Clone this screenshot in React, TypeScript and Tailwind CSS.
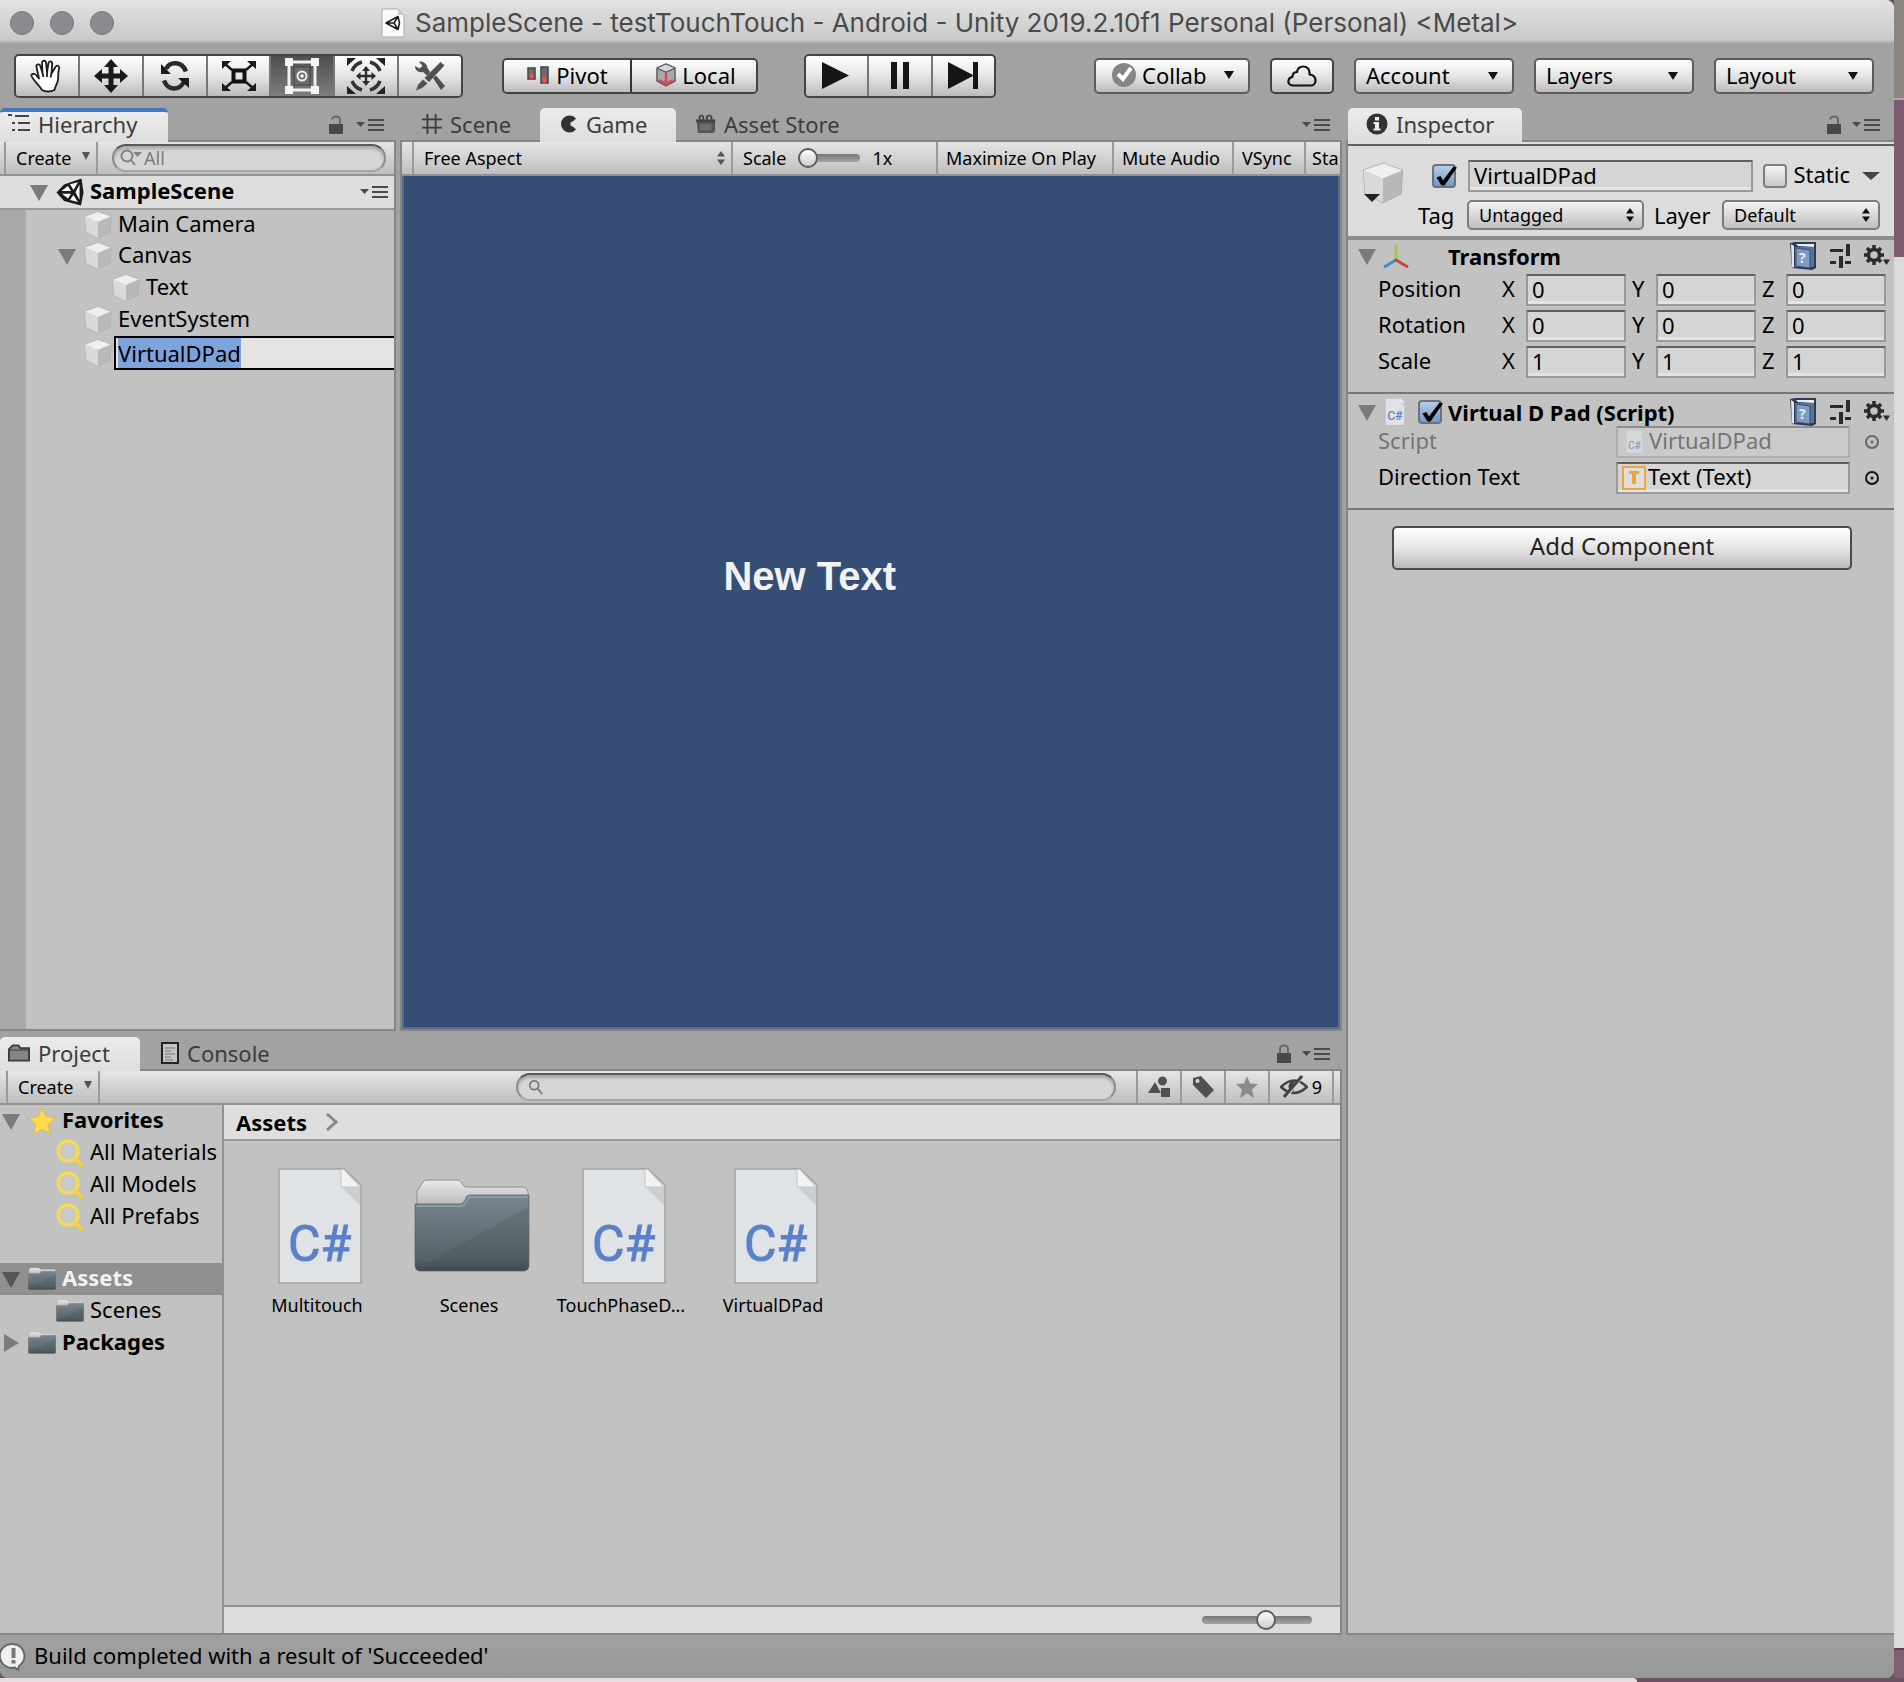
import React, { useEffect, useRef } from "react";

const BTN = "bg-linear-to-b from-white via-[#e6e5e6] to-[#bdbabc]";
const BAR = "flex h-[34px] shrink-0 border-b-2 border-[#919191] bg-linear-to-b from-[#e6e6e6] to-[#bebebe]";
const FIELD =
  "border-2 border-t-[#5f5f5f] border-x-[#9a9a9a] border-b-[#9a9a9a] bg-[#d5d5d5] shadow-[inset_0_-3px_0_#e4e4e4]";

/* ---------- icons ---------- */

function UnityMark({ size }: { size: number }) {
  return (
    <svg width={size} height={size} viewBox="0 0 28 28" aria-hidden="true">
      <path d="M0.5 14.5 8 6.5 25.5 0.5 27.5 14.5 25 27.5 8 23Z" fill="#1c1c1c" />
      <path d="M17.5 12 14 6.3 22 4.2Z" fill="#fff" />
      <path d="M6 12.5 12 8 15 13H6Z" fill="#fff" />
      <path d="M6 15.8H15L12 20.5Z" fill="#fff" />
      <path d="M17.3 17 22 24 14 22Z" fill="#fff" />
      <path d="M19.5 14.3 23.5 6.5V22Z" fill="#fff" />
    </svg>
  );
}

function Cube({ size = 28 }: { size?: number }) {
  return (
    <svg width={size} height={size} viewBox="0 0 28 28" className="shrink-0" aria-hidden="true">
      <path d="M14 1 27 5.5 26 21 14 27 2 21 1 5.5Z" fill="#d0d0d0" stroke="#a5a5a5" strokeWidth=".8" />
      <path d="M14 1 27 5.5 14 11 1 5.5Z" fill="#efefef" />
      <path d="M1 5.5 14 11V27L2 21Z" fill="#d9d9d9" />
      <path d="M27 5.5 14 11V27L26 21Z" fill="#b8b8b8" />
    </svg>
  );
}

function Foldout({ open = true, dark = false }: { open?: boolean; dark?: boolean }) {
  return (
    <svg width="18" height="18" viewBox="0 0 18 18" className="shrink-0" fill={dark ? "#555" : "#7b7b7b"} aria-hidden="true">
      {open ? <path d="M0 2H18L9 18Z" /> : <path d="M2 0V18L17 9Z" />}
    </svg>
  );
}

function PaneMenu() {
  return (
    <button aria-label="Pane options" className="flex">
      <svg width="28" height="14" viewBox="0 0 28 14" fill="#4a4a4a" aria-hidden="true">
        <path d="M0 4H9L4.5 9Z" />
        <path d="M12 1H28V3H12ZM12 6H28V8H12ZM12 11H28V13H12Z" />
      </svg>
    </button>
  );
}

function Lock({ open = true }: { open?: boolean }) {
  return (
    <button aria-label="Lock" className="flex">
      <svg width="16" height="20" viewBox="0 0 16 20" aria-hidden="true">
        <rect x="1" y="9" width="14" height="10" fill="#484848" />
        <path d={open ? "M4 4.5C4.500 2 7 1.500 8 1.500C10.500 1.500 12 3 12 5V9" : "M4 9V5C4 3 5.500 1.500 8 1.500C10.500 1.500 12 3 12 5V9"} fill="none" stroke="#6a6a6a" strokeWidth="2" />
      </svg>
    </button>
  );
}

function Down({ w = 10, fill = "#111" }: { w?: number; fill?: string }) {
  return (
    <svg width={w} height={8} viewBox="0 0 10 8" preserveAspectRatio="none" fill={fill} aria-hidden="true">
      <path d="M0 0H10L5 8Z" />
    </svg>
  );
}

function UpDown({ fill = "#111" }: { fill?: string }) {
  return (
    <svg width="8" height="14" viewBox="0 0 8 14" fill={fill} aria-hidden="true">
      <path d="M4 0 8 5.500H0ZM4 14 8 8.500H0Z" />
    </svg>
  );
}

function ScriptIcon({ w, h }: { w: number; h: number }) {
  return (
    <svg width={w} height={h} viewBox="0 0 84 118" className="shrink-0" aria-hidden="true">
      <path d="M1 1H66L83 17V115H1Z" fill="#dfe3e5" stroke="#a3a3a3" strokeWidth="1.500" />
      <path d="M63 19 82 37V17Z" fill="#cccfd1" />
      <path d="M63 1.500V19H82L66 1.500Z" fill="#f0f2f3" stroke="#c4c7c8" />
      <text x="10" y="93" fontFamily="Roboto, sans-serif" fontSize="50" fill="#5a80c8" stroke="#5a80c8" strokeWidth="1">C#</text>
    </svg>
  );
}

function Folder({ w, h }: { w: number; h: number }) {
  return (
    <svg width={w} height={h} viewBox="0 0 116 96" className="shrink-0" aria-hidden="true">
      <defs>
        <linearGradient id="folderBody" x1="0" y1="0" x2="0" y2="1">
          <stop offset="0" stopColor="#78868e" />
          <stop offset=".85" stopColor="#566168" />
          <stop offset="1" stopColor="#3f4a50" />
        </linearGradient>
        <linearGradient id="folderTab" x1="0" y1="0" x2="0" y2="1">
          <stop offset="0" stopColor="#e9e9e9" />
          <stop offset="1" stopColor="#b4b4b4" />
        </linearGradient>
      </defs>
      <path d="M3 26V12L9 3Q10 1 13 1H43Q46 1 47 3L51 8H108Q113 8 114 13V30Z" fill="url(#folderTab)" stroke="#8c8c8c" />
      <path d="M1 25H46Q49 25 51 21L53 17Q54 16 57 16H115V86Q115 92 109 92H7Q1 92 1 86Z" fill="url(#folderBody)" stroke="#4c575d" strokeOpacity=".6" />
      <path d="M114 28 14 84V90H108Q114 90 114 84Z" fill="#3b464c" fillOpacity=".18" />
      <path d="M2 27H47Q50 27 52 23L55 18H114" fill="none" stroke="#8b9ba3" strokeWidth="2" />
    </svg>
  );
}

function Magnifier() {
  return (
    <svg width="28" height="28" viewBox="0 0 28 28" className="shrink-0" aria-hidden="true">
      <circle cx="12" cy="12" r="10" fill="#cac9c4" stroke="#f9da50" strokeWidth="3" />
      <path d="M19 19.500 25.500 26" stroke="#f5d040" strokeWidth="4" strokeLinecap="round" />
    </svg>
  );
}

function Star() {
  return (
    <svg width="28" height="28" viewBox="0 0 28 28" className="shrink-0" aria-hidden="true">
      <path d="M14 1 17.800 9.800 27.500 10.700 20.200 17.200 22.400 27 14 22 5.600 27 7.800 17.200 0.500 10.700 10.200 9.800Z" fill="#fcdc4c" stroke="#dcb93a" strokeWidth=".8" />
    </svg>
  );
}

function HandTool() {
  return (
    <svg width="34" height="34" viewBox="0 0 34 34" fill="#fff" stroke="#1e1e1e" strokeWidth="1.800" strokeLinejoin="round" aria-hidden="true">
      <path d="M12 31C10 27 3 21 1.500 17C1 15 4 13.800 6 16L9 19.500 6.500 8C6 5 9.500 4.500 10.300 7L12.500 14 12 4C12 1 15.800 1 16 4L17 13.500 18.500 4C19 1.500 22.500 2 22.200 5L21.500 14.500 25.500 8C27 5.500 30 7 29 10C27.500 14 29 19 27.500 23C26.500 26 25 28 24.500 31C21 33 15 33 12 31Z" />
      <path d="M12.500 14 13.500 18M17 13.500V18M21.500 14.500 20.500 18.500" fill="none" />
    </svg>
  );
}

function MoveTool() {
  return (
    <svg width="34" height="34" viewBox="0 0 34 34" fill="#1a1a1a" aria-hidden="true">
      <path d="M17 0 24 8H19.500V14.500H26V10L34 17 26 24V19.500H19.500V26H24L17 34 10 26H14.500V19.500H8V24L0 17 8 10V14.500H14.500V8H10Z" />
    </svg>
  );
}

function RotateTool() {
  return (
    <svg width="32" height="32" viewBox="0 0 32 32" aria-hidden="true">
      <path d="M7 9C11 1 23 1 27 11.500M25 22C20 31 9 31 5 20.500" fill="none" stroke="#2a2a2a" strokeWidth="4.500" />
      <path d="M2 4V14H12ZM30 28V18H19Z" fill="#1a1a1a" />
    </svg>
  );
}

function ScaleTool() {
  return (
    <svg width="36" height="32" viewBox="0 0 36 32" aria-hidden="true">
      <rect x="12.500" y="10.500" width="11" height="11" fill="none" stroke="#111" strokeWidth="4" />
      <path d="M3 3 11 10M33 3 25 10M3 29 11 22M33 29 25 22" stroke="#1a1a1a" strokeWidth="2.500" />
      <path d="M1 1H10L1 9ZM35 1V9L26 1ZM1 31V23L10 31ZM35 31H26L35 23Z" fill="#1a1a1a" />
    </svg>
  );
}

function RectTool() {
  return (
    <svg width="34" height="36" viewBox="0 0 34 36" aria-hidden="true">
      <rect x="4" y="4" width="26" height="28" fill="none" stroke="#f1f1f1" strokeWidth="3" />
      <rect x="9" y="9" width="16" height="18" fill="#6b6b6b" stroke="#444" />
      <circle cx="17" cy="18" r="4.500" fill="none" stroke="#eee" strokeWidth="2" />
      <circle cx="17" cy="18" r="1.800" fill="#fff" />
      <path d="M0 0H8V8H0ZM26 0H34V8H26ZM0 28H8V36H0ZM26 28H34V36H26Z" fill="#f5f5f5" />
    </svg>
  );
}

function TransformTool() {
  return (
    <svg width="38" height="36" viewBox="0 0 38 36" aria-hidden="true">
      <path d="M19 8 23 13H20.200V16.800H24.500V14L29 18 24.500 22V19.200H20.200V23H23L19 28 15 23H17.800V19.200H13.500V22L9 18 13.500 14V16.800H17.800V13H15Z" fill="#2c2c2c" />
      <path d="M15 4A15 15 0 0 0 5 13M23 4A15 15 0 0 1 33 13M15 32A15 15 0 0 1 5 23M23 32A15 15 0 0 0 33 23" fill="none" stroke="#333" strokeWidth="3.500" />
      <path d="M0 0H9L0 8ZM38 0V8L29 0ZM0 36V28L9 36ZM38 36H29L38 28Z" fill="#222" />
    </svg>
  );
}

function CustomTool() {
  return (
    <svg width="32" height="30" viewBox="0 0 32 30" fill="#4f4f4f" aria-hidden="true">
      <path d="M5 0.500C9 0 13 2.500 13.500 7L16 11 13 14.500 9 11C5 12 1 9.500 1 5L5.500 7.500 8.500 5Z" />
      <path d="M19 17 22 14.500 31 25 27 29Z" />
      <path d="M26.500 1 30.500 4.500 15 21 10.500 17Z" />
      <path d="M9 18.500 13.500 22.500 8 27 2 29.500 4 24Z" />
    </svg>
  );
}

function PivotIcon() {
  return (
    <svg width="24" height="22" viewBox="0 0 24 22" aria-hidden="true">
      <path d="M2 4H9V15H2ZM15 3H22V19H15Z" fill="#6b6b6b" stroke="#444" strokeWidth="1.500" />
      <path d="M5.500 8 8.500 12 5.500 15.500 2.500 12ZM18.500 12 21.500 16 18.500 20 15.500 16Z" fill="#e2535a" />
    </svg>
  );
}

function LocalIcon() {
  return (
    <svg width="20" height="24" viewBox="0 0 20 24" aria-hidden="true">
      <path d="M10 1 19 5V18L10 23 1 18V5Z" fill="#a9a9a9" stroke="#5d5d5d" strokeWidth="1.500" />
      <path d="M1 5 10 9 19 5M10 9V14" fill="none" stroke="#5d5d5d" strokeWidth="1.500" />
      <path d="M10 1 19 5 10 9 1 5Z" fill="#d7d7d7" stroke="#5d5d5d" />
      <path d="M10 11V22M3 17 10 21 17 17" fill="none" stroke="#d9474f" strokeWidth="2.500" />
    </svg>
  );
}

function BookIcon() {
  return (
    <svg width="26" height="28" viewBox="0 0 26 28" aria-hidden="true">
      <path d="M0 1 5 0H26V26L22 28 2 26Z" fill="#2c3b57" />
      <path d="M1 2 4 4V26L2 25Z" fill="#dfe6f0" />
      <path d="M6 2H24V5L8 4Z" fill="#e8edf4" />
      <path d="M5 5H24V25H5Z" fill="#56749d" />
      <path d="M6 6 20 8V26L6 24Z" fill="#7f9bc1" stroke="#3b5173" />
      <text x="9" y="21" fontFamily="Open Sans, sans-serif" fontWeight="bold" fontSize="14" fill="#e6edf7">?</text>
    </svg>
  );
}

function PresetIcon() {
  return (
    <svg width="22" height="24" viewBox="0 0 22 24" fill="#2b2b2b" aria-hidden="true">
      <path d="M0 5H13V8H0ZM16 0H20V12H16ZM0 17H6V20H0ZM9 12H13V24H9ZM15 17H21V20H15Z" />
    </svg>
  );
}

function GearIcon() {
  return (
    <svg width="26" height="22" viewBox="0 0 26 22" aria-hidden="true">
      <circle cx="10" cy="10" r="5.500" fill="none" stroke="#2b2b2b" strokeWidth="3.500" />
      <path d="M10 0V4M10 16V20M0 10H4M16 10H20M3 3 6 6M14 14 17 17M17 3 14 6M6 14 3 17" stroke="#2b2b2b" strokeWidth="3.500" />
      <path d="M19 14.500H26L22.500 20Z" fill="#2b2b2b" />
    </svg>
  );
}

/* ---------- controls ---------- */

function Label({ children, className = "" }: { children: React.ReactNode; className?: string }) {
  return <span className={`pb-1 ${className}`}>{children}</span>;
}

function Popup({ id, label, value, className }: { id: string; label: string; value: string; className: string }) {
  return (
    <div className={`relative flex h-9 items-center ${className}`}>
      <select
        id={id}
        aria-label={label}
        className={`h-full w-full appearance-none rounded-[5px] border-2 border-[#5c5c5c] pb-0.5 pl-2.5 text-[22px] leading-7 ${BTN}`}
      >
        <option>{value}</option>
      </select>
      <span className="pointer-events-none absolute right-4 flex">
        <Down />
      </span>
    </div>
  );
}

function SmallSelect({ id, value, className }: { id: string; value: string; className: string }) {
  return (
    <div className={`relative flex h-[30px] items-center ${className}`}>
      <select
        id={id}
        className="h-full w-full appearance-none rounded-[5px] border-2 border-[#7c7c7c] bg-linear-to-b from-[#f4f4f4] to-[#bfbfbf] pl-2.5 text-lg leading-6"
      >
        <option>{value}</option>
      </select>
      <span className="pointer-events-none absolute right-2.5 flex">
        <UpDown />
      </span>
    </div>
  );
}

function Check({ id, label, checked = false }: { id: string; label?: string; checked?: boolean }) {
  return (
    <span className="relative flex size-6 shrink-0">
      <input
        id={id}
        type="checkbox"
        aria-label={label}
        defaultChecked={checked}
        className="peer size-6 appearance-none rounded-[4px] border-2 border-[#7e7e7e] bg-linear-to-b from-[#f4f4f4] to-[#c9c9c9] checked:border-[#6b7280] checked:from-[#b6cbe6] checked:to-[#7696c8]"
      />
      <svg viewBox="0 0 26 26" className="pointer-events-none absolute inset-0 hidden size-[26px] peer-checked:block" aria-hidden="true">
        <path d="M4.500 13.500 8.500 12 11 16.500 21.500 2.500 25 3.500 12.500 21.500 9.500 21.500Z" fill="#000" />
      </svg>
    </span>
  );
}

function Tab({ icon, children, active = false, focus = false, className = "" }: { icon: React.ReactNode; children: React.ReactNode; active?: boolean; focus?: boolean; className?: string }) {
  return (
    <button
      role="tab"
      aria-selected={active}
      className={`flex items-center gap-2 self-stretch rounded-t-[5px] text-[22px] leading-8 text-[#3c3c3c] ${active ? "z-10 -mb-0.5 bg-linear-to-b from-[#ececec] to-[#dedede] pb-0.5" : ""} ${focus ? "border-t-4 border-[#4677c2] pb-1.5" : ""} ${className}`}
    >
      {icon}
      <span>{children}</span>
    </button>
  );
}

function CreateButton() {
  return (
    <button className="flex w-[94px] shrink-0 items-center justify-between border-x-2 border-[#9a9a9a] pl-2.5 pr-1.5 text-lg">
      Create
      <span className="mb-1 flex">
        <Down w={8} fill="#555" />
      </span>
    </button>
  );
}

const SEARCH =
  "flex h-7 items-center rounded-full border-2 border-t-[#5a5a5a] border-x-[#8b8b8b] border-b-[#a5a5a5] bg-[#d6d6d6] shadow-[inset_0_3px_3px_#aaa]";

const SLIDER =
  "appearance-none bg-transparent [&::-webkit-slider-runnable-track]:h-2 [&::-webkit-slider-runnable-track]:rounded-full [&::-webkit-slider-runnable-track]:bg-linear-to-b [&::-webkit-slider-runnable-track]:from-[#777] [&::-webkit-slider-runnable-track]:to-[#a5a5a5] [&::-webkit-slider-thumb]:-mt-1.5 [&::-webkit-slider-thumb]:size-5 [&::-webkit-slider-thumb]:appearance-none [&::-webkit-slider-thumb]:rounded-full [&::-webkit-slider-thumb]:border-2 [&::-webkit-slider-thumb]:border-[#5e5e5e] [&::-webkit-slider-thumb]:bg-linear-to-b [&::-webkit-slider-thumb]:from-white [&::-webkit-slider-thumb]:to-[#cfcdce]";

/* ---------- top of window ---------- */

function TitleBar() {
  return (
    <header className="flex h-[43px] shrink-0 items-center border-b-2 border-[#b4b4b4] bg-linear-to-b from-[#e2e2e2] to-[#c9c9c9] pl-2.5 pt-1">
      <div className="flex gap-4">
        {["Close", "Minimize", "Zoom"].map((n) => (
          <button key={n} aria-label={n} className="size-6 rounded-full border border-[#77757a] bg-[#8d8b90]" />
        ))}
      </div>
      <div className="flex flex-1 items-center gap-2.5 pl-[267px]">
        <svg width="24" height="30" viewBox="0 0 24 30" className="shrink-0" aria-hidden="true">
          <path d="M1 1H17L23 7V29H1Z" fill="#fafafa" stroke="#aaa" />
          <path d="M17 1V7H23Z" fill="#ccc" />
          <path d="M5 15 17 8.500 18.500 15 17 21.500ZM5 15H13L17 8.500M13 15 17 21.500" fill="none" stroke="#1c1c1c" strokeWidth="1.500" strokeLinejoin="round" />
        </svg>
        <h1 className="whitespace-nowrap font-['Inter',sans-serif] text-[26px] leading-8 text-[#4a4a4a]">
          SampleScene - testTouchTouch - Android - Unity 2019.2.10f1 Personal (Personal) &lt;Metal&gt;
        </h1>
      </div>
    </header>
  );
}

const TOOLS = [
  { name: "Hand", icon: <HandTool /> },
  { name: "Move", icon: <MoveTool /> },
  { name: "Rotate", icon: <RotateTool /> },
  { name: "Scale", icon: <ScaleTool /> },
  { name: "Rect", icon: <RectTool /> },
  { name: "Transform", icon: <TransformTool /> },
  { name: "Custom", icon: <CustomTool /> },
];

const PLAY = [
  { name: "Play", icon: <path d="M0 0 27 13.500 0 27Z" /> },
  { name: "Pause", icon: <path d="M6 0H12V27H6ZM18 0H24V27H18Z" /> },
  { name: "Step", icon: <path d="M0 0 25 13V0H30V27H25V14L0 27Z" /> },
];

function Toolbar() {
  return (
    <div className="flex h-[65px] shrink-0 items-center pl-3.5 pr-5">
      <div className="flex h-11 w-[449px] overflow-hidden rounded-[5px] border-2 border-[#444]">
        {TOOLS.map((t) => (
          <button
            key={t.name}
            aria-label={t.name}
            className={`flex flex-1 items-center justify-center border-l-2 border-[#777] first:border-l-0 ${t.name === "Rect" ? "bg-linear-to-b from-[#4f4f4f] to-[#7d7d7d]" : BTN}`}
          >
            {t.icon}
          </button>
        ))}
      </div>
      <div className="ml-[39px] flex h-9 w-64 overflow-hidden rounded-[5px] border-2 border-[#444] text-[22px] leading-7">
        <button className={`flex w-1/2 items-center justify-center gap-1.5 pb-0.5 ${BTN}`}>
          <PivotIcon />
          Pivot
        </button>
        <button className={`flex w-1/2 items-center justify-center gap-1.5 border-l-2 border-[#333] pb-0.5 pl-1 ${BTN}`}>
          <LocalIcon />
          Local
        </button>
      </div>
      <div className="ml-[46px] flex h-11 w-48 overflow-hidden rounded-[5px] border-2 border-[#444]">
        {PLAY.map((p) => (
          <button key={p.name} aria-label={p.name} className={`flex flex-1 items-center justify-center border-l-2 border-[#777] first:border-l-0 ${BTN}`}>
            <svg width="30" height="27" viewBox="0 0 30 27" fill="#151515" aria-hidden="true">
              {p.icon}
            </svg>
          </button>
        ))}
      </div>
      <div className="ml-auto flex items-center gap-5">
        <button className={`flex h-9 w-[156px] items-center rounded-[5px] border-2 border-[#5c5c5c] pb-0.5 pl-4 text-[22px] leading-7 ${BTN}`}>
          <svg width="24" height="24" viewBox="0 0 24 24" aria-hidden="true">
            <circle cx="12" cy="12" r="12" fill="#858585" />
            <path d="M6 11 11 16 19 5" fill="none" stroke="#fff" strokeWidth="4" />
          </svg>
          <span className="ml-1.5 mr-auto">Collab</span>
          <span className="mr-3.5 flex">
            <Down />
          </span>
        </button>
        <button aria-label="Services" className={`flex h-9 w-16 items-center justify-center rounded-[5px] border-2 border-[#444] ${BTN}`}>
          <svg width="30" height="22" viewBox="0 0 30 22" fill="none" stroke="#111" strokeWidth="2.200" strokeLinejoin="round" aria-hidden="true">
            <path d="M6 20.500C2 20.500 1 17.500 1.500 15.500C2 13 4 12 5.500 12C5.500 8.500 7.500 7 10 7C10.500 3.500 13 1.500 16.500 1.500C20.500 1.500 23 4.500 22.500 9.500C26.500 10 28.500 12.500 28.500 15.500C28.500 18.500 26.500 20.500 24 20.500Z" />
          </svg>
        </button>
        <Popup id="account" label="Account" value="Account" className="w-40" />
        <Popup id="layers" label="Layers" value="Layers" className="w-40" />
        <Popup id="layout" label="Layout" value="Layout" className="w-40" />
      </div>
    </div>
  );
}

/* ---------- hierarchy ---------- */

function RenameField() {
  const ref = useRef<HTMLInputElement>(null);
  useEffect(() => {
    ref.current?.focus();
    ref.current?.select();
  }, []);
  return (
    <input
      ref={ref}
      aria-label="Object name"
      defaultValue="VirtualDPad"
      className="h-[34px] min-w-0 flex-1 border-2 border-r-0 border-black bg-[#e4e4e4] px-0.5 text-[22px] leading-[26px] caret-transparent outline-none selection:bg-[#7ea2dc] selection:text-black"
    />
  );
}

function Hierarchy() {
  return (
    <section className="flex w-[396px] shrink-0 flex-col">
      <div className="flex h-[34px] shrink-0 items-center border-b-2 border-[#868686]" role="tablist">
        <Tab
          active
          focus
          className="w-[168px] pl-2"
          icon={
            <svg width="22" height="20" viewBox="0 0 22 20" fill="#444" aria-hidden="true">
              <path d="M0 0H4V2H0ZM7 1H21V3H7ZM4 8H7V10H4ZM10 8H22V10H10ZM4 15H7V17H4ZM10 15H22V17H10Z" />
            </svg>
          }
        >
          Hierarchy
        </Tab>
        <div className="ml-auto mr-3 flex items-center gap-3 pt-0.5">
          <Lock />
          <PaneMenu />
        </div>
      </div>
      <div className="flex flex-1 flex-col border-b-2 border-r-2 border-[#868686] bg-[#c2c2c2]">
        <div className={`${BAR} items-stretch pl-1`}>
          <CreateButton />
          <label className={`${SEARCH} ml-3.5 mr-2 mt-0.5 min-w-0 flex-1 gap-0.5 pl-1.5`}>
            <svg width="22" height="18" viewBox="0 0 22 18" fill="none" stroke="#808080" strokeWidth="2" className="shrink-0" aria-hidden="true">
              <circle cx="7" cy="7" r="5.500" />
              <path d="M11 11 15 16" />
              <path d="M13 3H22L17.500 8Z" fill="#808080" stroke="none" />
            </svg>
            <input type="search" aria-label="Search hierarchy" placeholder="All" className="min-w-0 flex-1 bg-transparent text-lg leading-6 placeholder:text-[#7c7c7c]" />
          </label>
        </div>
        <div className="flex h-[34px] shrink-0 items-center border-b-2 border-[#999] bg-[#dedede] pl-[30px] pr-1.5 text-[22px] font-bold leading-7">
          <Foldout />
          <span className="ml-2 mr-1.5">
            <UnityMark size={28} />
          </span>
          <Label className="mr-auto">SampleScene</Label>
          <PaneMenu />
        </div>
        <div className="flex-1 border-l-[26px] border-[#a9a9a9] text-[22px] leading-7">
          <div className="flex h-[30px] items-center gap-1.5 pl-[58px]">
            <Cube />
            <Label>Main Camera</Label>
          </div>
          <div className="flex h-8 items-center gap-1.5 pl-8">
            <Foldout />
            <span className="ml-0.5">
              <Cube />
            </span>
            <Label>Canvas</Label>
          </div>
          <div className="flex h-8 items-center gap-1.5 pl-[86px]">
            <Cube />
            <Label>Text</Label>
          </div>
          <div className="flex h-8 items-center gap-1.5 pl-[58px]">
            <Cube />
            <Label>EventSystem</Label>
          </div>
          <div className="flex h-[34px] items-center gap-0.5 pl-[58px]">
            <Cube />
            <RenameField />
          </div>
        </div>
      </div>
    </section>
  );
}

/* ---------- game view ---------- */

function Game() {
  const cell = "flex shrink-0 items-center whitespace-nowrap border-l-2 border-[#9a9a9a] text-lg";
  return (
    <section className="flex min-w-0 flex-1 flex-col">
      <div className="flex h-[34px] shrink-0 items-center border-b-2 border-[#868686] pl-[22px]" role="tablist">
        <Tab
          className="w-[118px]"
          icon={
            <svg width="20" height="22" viewBox="0 0 22 22" stroke="#3c3c3c" strokeWidth="2" aria-hidden="true">
              <path d="M6 0V22M15 0V22M0 6H22M0 15H22" />
            </svg>
          }
        >
          Scene
        </Tab>
        <Tab
          active
          className="w-[136px] pl-5"
          icon={
            <svg width="18" height="18" viewBox="0 0 18 18" aria-hidden="true">
              <path d="M16 3.500A8.500 8.500 0 1 0 16 14.500L13.500 12 10.500 10.500V7.500L13.500 6Z" fill="#333" />
            </svg>
          }
        >
          Game
        </Tab>
        <Tab
          className="pl-5"
          icon={
            <svg width="20" height="22" viewBox="0 0 22 22" aria-hidden="true">
              <path d="M1 8H19L21 6V19L19 21H2Z" fill="#555" />
              <path d="M0 6H21V9H0Z" fill="#444" />
              <path d="M4 7V3Q6 0 8 3V7M12 7V3Q14 0 17 3V7" fill="none" stroke="#444" strokeWidth="2" />
              <path d="M4 11H17V18H4Z" fill="#6e6e6e" />
            </svg>
          }
        >
          Asset Store
        </Tab>
        <div className="ml-auto mr-3 pt-0.5">
          <PaneMenu />
        </div>
      </div>
      <div className="flex flex-1 flex-col border-x-2 border-b-2 border-[#868686]">
        <div className={`${BAR} overflow-hidden pl-2.5`}>
          <div className={`${cell} relative min-w-0 flex-1`}>
            <select aria-label="Aspect ratio" className="h-full w-full appearance-none bg-transparent pl-2.5">
              <option>Free Aspect</option>
            </select>
            <span className="pointer-events-none absolute right-1.5">
              <UpDown fill="#555" />
            </span>
          </div>
          <div className={`${cell} w-[205px] pl-2.5`}>
            <label htmlFor="scale">Scale</label>
            <input id="scale" type="range" min="1" max="5" defaultValue="1" className={`ml-3 mr-3 w-[62px] ${SLIDER}`} />
            <output htmlFor="scale">1x</output>
          </div>
          <button className={`${cell} w-44 pl-2`}>Maximize On Play</button>
          <button className={`${cell} w-[120px] pl-2`}>Mute Audio</button>
          <button className={`${cell} w-[72px] pl-2`}>VSync</button>
          <button className={`${cell} w-9 overflow-hidden pl-1.5`}>Sta</button>
        </div>
        <div className="relative flex-1 border-2 border-t-0 border-[#586b91] bg-[#364d76]">
          <p className="absolute left-[34.2%] top-[47%] -translate-y-1/2 whitespace-nowrap font-['Liberation_Sans',sans-serif] text-[40px] font-bold leading-none text-[#f2f2f2]">
            New Text
          </p>
        </div>
      </div>
    </section>
  );
}

/* ---------- project ---------- */

const ASSETS = [
  { name: "Multitouch", kind: "script" },
  { name: "Scenes", kind: "folder" },
  { name: "TouchPhaseD...", kind: "script" },
  { name: "VirtualDPad", kind: "script" },
];

const FILTERS = [
  {
    name: "Search by type",
    icon: <path d="M0 17 7 6 13 17ZM10 5A4.500 4.500 0 1 1 19 5A4.500 4.500 0 1 1 10 5ZM13 12H22V21H13Z" fill="#505050" />,
  },
  { name: "Search by label", icon: <path d="M1 2 9 0 22 14 14 22 1 9ZM3.500 5A2 2 0 1 0 7.500 5A2 2 0 1 0 3.500 5Z" fill="#505050" fillRule="evenodd" /> },
  { name: "Save search", icon: <path d="M11 0 14 7.500 22 8 16 13.500 18 22 11 17.500 4 22 6 13.500 0 8 8 7.500Z" fill="#8b8b8b" /> },
];

function Project() {
  const row = "flex h-8 shrink-0 items-center whitespace-nowrap";
  return (
    <section className="flex min-h-0 flex-col">
      <div className="flex h-[34px] shrink-0 items-center border-b-2 border-[#868686]" role="tablist">
        <Tab
          active
          className="w-[140px] pl-2"
          icon={
            <svg width="22" height="18" viewBox="0 0 23 18" aria-hidden="true">
              <path d="M1 17V5L5 1H11L13 4H22V17Z" fill="#858585" stroke="#3c3c3c" strokeWidth="2" />
              <path d="M1 6H22" stroke="#3c3c3c" />
            </svg>
          }
        >
          Project
        </Tab>
        <Tab
          className="pl-[21px]"
          icon={
            <svg width="18" height="22" viewBox="0 0 18 22" fill="none" aria-hidden="true">
              <path d="M1 1H17V21H1Z" stroke="#222" strokeWidth="2" fill="#c4c4c4" />
              <path d="M4 6H14M4 9H10M4 12H14M4 15H10M4 18H12" stroke="#777" strokeWidth="1" />
            </svg>
          }
        >
          Console
        </Tab>
        <div className="ml-auto mr-3 flex items-center gap-2.5 pt-0.5">
          <Lock open={false} />
          <PaneMenu />
        </div>
      </div>
      <div className="flex min-h-0 flex-1 flex-col border-b-2 border-r-2 border-[#868686] bg-[#c2c2c2]">
        <div className={`${BAR} pl-1.5`}>
          <CreateButton />
          <label className={`${SEARCH} ml-auto mr-5 mt-0.5 w-[600px] pl-2.5`}>
            <svg width="16" height="16" viewBox="0 0 18 18" fill="none" stroke="#777" strokeWidth="2" className="shrink-0" aria-hidden="true">
              <circle cx="7" cy="7" r="5" />
              <path d="M11 11 16 17" />
            </svg>
            <input type="search" aria-label="Search project" className="min-w-0 flex-1 bg-transparent text-lg leading-6" />
          </label>
          {FILTERS.map((f) => (
            <button key={f.name} aria-label={f.name} className="flex w-11 items-center justify-center border-l-2 border-[#999]">
              <svg width="22" height="22" viewBox="0 0 22 22" aria-hidden="true">
                {f.icon}
              </svg>
            </button>
          ))}
          <button className="mr-1.5 flex w-[66px] items-center justify-center gap-1 border-x-2 border-[#999] text-lg">
            <svg width="28" height="24" viewBox="0 0 28 24" fill="none" stroke="#444" strokeWidth="2.500" aria-hidden="true">
              <path d="M1 12Q14-1 27 12Q14 24 1 12Z" />
              <path d="M14 6A5.500 5.500 0 1 0 14 17Z" fill="#444" stroke="none" />
              <path d="M6 23 23 1" stroke="#cfcfcf" />
              <path d="M4 22 22 1" strokeWidth="3" />
            </svg>
            9
          </button>
        </div>
        <div className="flex min-h-0 flex-1">
          <nav className="flex w-56 shrink-0 flex-col overflow-hidden border-r-2 border-[#919191] text-[22px] leading-7">
            <div className={`${row} gap-1.5 pl-0.5 font-bold`}>
              <Foldout />
              <span className="ml-0.5">
                <Star />
              </span>
              <Label>Favorites</Label>
            </div>
            {["All Materials", "All Models", "All Prefabs"].map((n) => (
              <div key={n} className={`${row} gap-1.5 pl-14`}>
                <Magnifier />
                <Label>{n}</Label>
              </div>
            ))}
            <div className={`${row} mt-[30px] gap-1.5 bg-[#8f8f8f] pl-0.5 font-bold text-[#f2f2f2]`}>
              <Foldout dark />
              <span className="ml-0.5">
                <Folder w={28} h={24} />
              </span>
              <Label>Assets</Label>
            </div>
            <div className={`${row} gap-1.5 pl-14`}>
              <Folder w={28} h={24} />
              <Label>Scenes</Label>
            </div>
            <div className={`${row} gap-1.5 pl-0.5 font-bold`}>
              <Foldout open={false} />
              <span className="ml-0.5">
                <Folder w={28} h={24} />
              </span>
              <Label>Packages</Label>
            </div>
          </nav>
          <div className="flex min-w-0 flex-1 flex-col">
            <div className="flex h-9 shrink-0 items-center gap-[18px] border-b-2 border-[#999] bg-[#dedede] pl-3 text-[22px] font-bold leading-8">
              Assets
              <svg width="14" height="18" viewBox="0 0 14 18" fill="none" stroke="#8a8a8a" strokeWidth="3" aria-hidden="true">
                <path d="M2 1 11 9 2 17" />
              </svg>
            </div>
            <ul className="flex flex-1 flex-wrap content-start pl-[17px] pt-[26px]">
              {ASSETS.map((a) => (
                <li key={a.name} className="flex w-[152px] flex-col items-center text-lg leading-6">
                  <span className="flex h-[120px] items-center pl-1.5">{a.kind === "folder" ? <Folder w={116} h={96} /> : <ScriptIcon w={84} h={118} />}</span>
                  <span className="mt-1.5">{a.name}</span>
                </li>
              ))}
            </ul>
            <div className="flex h-7 shrink-0 items-center justify-end border-t-2 border-[#919191] bg-[#dcdcdc] pr-7">
              <input type="range" aria-label="Icon size" min="0" max="100" defaultValue="60" className={`w-[110px] ${SLIDER}`} />
            </div>
          </div>
        </div>
      </div>
    </section>
  );
}

/* ---------- inspector ---------- */

function HeaderIcons() {
  return (
    <div className="ml-auto flex items-center">
      <button aria-label="Help" className="mr-3.5">
        <BookIcon />
      </button>
      <button aria-label="Presets" className="mr-3">
        <PresetIcon />
      </button>
      <button aria-label="Settings">
        <GearIcon />
      </button>
    </div>
  );
}

function Picker({ dim = false }: { dim?: boolean }) {
  return (
    <button aria-label="Select object" className={`ml-3.5 mr-3.5 flex ${dim ? "opacity-50" : ""}`}>
      <svg width="16" height="16" viewBox="0 0 16 16" aria-hidden="true">
        <circle cx="8" cy="8" r="6" fill="none" stroke="#111" strokeWidth="2" />
        <circle cx="8" cy="8" r="1.500" fill="#111" />
      </svg>
    </button>
  );
}

function VectorRow({ name, value }: { name: string; value: string }) {
  return (
    <div className="flex h-8 items-center" role="group" aria-label={name}>
      <Label className="w-[124px] shrink-0">{name}</Label>
      {["X", "Y", "Z"].map((axis) => (
        <label key={axis} className="mr-1.5 flex flex-1 items-center">
          <Label className="w-6 shrink-0">{axis}</Label>
          <input type="text" defaultValue={value} className={`h-8 w-0 min-w-0 flex-1 pb-0.5 pl-1 text-[22px] leading-7 ${FIELD}`} />
        </label>
      ))}
    </div>
  );
}

function Inspector() {
  return (
    <section className="flex w-[548px] shrink-0 flex-col">
      <div className="flex h-[34px] shrink-0 items-center border-b-2 border-[#868686] pl-0.5" role="tablist">
        <Tab
          active
          className="w-[174px] pl-[18px]"
          icon={
            <svg width="22" height="22" viewBox="0 0 22 22" aria-hidden="true">
              <circle cx="11" cy="11" r="10.500" fill="#333" />
              <path d="M9 4H13V7.500H9ZM7.500 9H13V15.500H14.500V17.500H7.500V15.500H9V11H7.500Z" fill="#eee" />
            </svg>
          }
        >
          Inspector
        </Tab>
        <div className="ml-auto mr-3.5 flex items-center gap-2.5 pt-0.5">
          <Lock />
          <PaneMenu />
        </div>
      </div>
      <div className="flex flex-1 flex-col border-b-2 border-l-2 border-[#868686] bg-[#c2c2c2] text-[22px] leading-7">
        <div className="flex h-[98px] shrink-0 items-start border-b-4 border-[#8d8d8d] bg-[#dcdcdc] shadow-[inset_0_2px_0_#e0e0e0,inset_0_4px_0_#5f5f5f]">
          <span className="relative ml-3.5 mt-5 flex">
            <Cube size={42} />
            <span className="absolute bottom-0.5 left-0.5">
              <Down w={16} fill="#222" />
            </span>
          </span>
          <div className="flex min-w-0 flex-1 flex-col gap-2 pl-3.5 pt-[18px]">
            <div className="flex h-8 min-w-0 items-center pl-3.5">
              <Check id="go-active" label="Active" checked />
              <input aria-label="Name" defaultValue="VirtualDPad" className={`ml-3 mr-2.5 h-8 w-0 min-w-0 flex-1 pb-0.5 pl-1 text-[22px] leading-7 ${FIELD}`} />
              <Check id="static" />
              <label htmlFor="static" className="ml-1.5 mr-3 pb-1">
                Static
              </label>
              <button aria-label="Static options" className="mr-3.5 flex w-[18px]">
                <Down w={18} fill="#444" />
              </button>
            </div>
            <div className="flex h-[30px] items-center">
              <label htmlFor="tag" className="w-[49px] shrink-0">
                Tag
              </label>
              <SmallSelect id="tag" value="Untagged" className="min-w-0 flex-1" />
              <label htmlFor="layer" className="ml-2.5 w-[68px] shrink-0">
                Layer
              </label>
              <SmallSelect id="layer" value="Default" className="mr-3.5 w-[158px] shrink-0" />
            </div>
          </div>
        </div>

        <div className="flex h-8 shrink-0 items-center pl-2.5 pr-1">
          <Foldout />
          <svg width="28" height="26" viewBox="0 0 28 26" className="ml-1.5 mr-[38px] shrink-0" fill="none" strokeLinecap="round" strokeWidth="3" aria-hidden="true">
            <path d="M14 17V3" stroke="#9fc94e" />
            <path d="M14 17 3 23.500" stroke="#3f8fc4" />
            <path d="M14 17 25 23.500" stroke="#d0453a" />
          </svg>
          <h2 className="font-bold">Transform</h2>
          <HeaderIcons />
        </div>
        <div className="flex flex-col gap-1 border-b-2 border-[#777] pb-3.5 pl-[30px] pr-0.5 pt-0.5">
          <VectorRow name="Position" value="0" />
          <VectorRow name="Rotation" value="0" />
          <VectorRow name="Scale" value="1" />
        </div>

        <div className="flex h-8 shrink-0 items-center pl-2.5 pr-1 pt-1">
          <Foldout />
          <span className="ml-2 mr-3">
            <ScriptIcon w={22} h={28} />
          </span>
          <Check id="script-on" checked />
          <label htmlFor="script-on" className="ml-1.5 font-bold">
            Virtual D Pad (Script)
          </label>
          <HeaderIcons />
        </div>
        <div className="flex flex-col gap-1 border-b-2 border-[#777] pb-3.5 pl-[30px]">
          <div className="flex h-8 items-center">
            <Label className="w-[238px] shrink-0 text-[#747474]">Script</Label>
            <span className="flex h-8 flex-1 items-center gap-1.5 border-2 border-[#b0b0b0] border-t-[#8e8e8e] bg-[#cacaca] pl-2 text-[#747474]">
              <span className="opacity-60">
                <ScriptIcon w={17} h={24} />
              </span>
              <Label>VirtualDPad</Label>
            </span>
            <Picker dim />
          </div>
          <div className="flex h-8 items-center">
            <Label className="w-[238px] shrink-0">Direction Text</Label>
            <span className={`flex h-8 flex-1 items-center gap-0.5 pl-1 ${FIELD}`}>
              <svg width="24" height="24" viewBox="0 0 24 24" aria-hidden="true">
                <rect x="1" y="1" width="22" height="22" fill="#dedede" stroke="#f2a33a" strokeWidth="2" />
                <path d="M7 5H17V8H14V18H10V8H7Z" fill="#f2a33a" />
              </svg>
              <Label>Text (Text)</Label>
            </span>
            <Picker />
          </div>
        </div>
        <button className={`ml-11 mr-[42px] mt-4 h-11 shrink-0 rounded-[5px] border-2 border-[#4b4b4b] pb-1 text-2xl text-[#222] ${BTN}`}>Add Component</button>
      </div>
    </section>
  );
}

export default function App() {
  return (
    <div className="flex h-screen flex-col overflow-hidden bg-[#6b5061] font-['Noto_Sans','Open_Sans',sans-serif] text-black">
      <div className="flex min-h-0 flex-1">
        <div className="flex min-w-0 flex-1 flex-col overflow-hidden rounded-b-lg rounded-tr-lg bg-[#a2a2a2]">
          <TitleBar />
          <Toolbar />
          <main className="flex min-h-0 flex-1 gap-1">
            <div className="grid min-w-0 flex-1 grid-rows-[922fr_598fr] gap-1.5">
              <div className="flex min-h-0 gap-1">
                <Hierarchy />
                <Game />
              </div>
              <Project />
            </div>
            <Inspector />
          </main>
          <footer className="flex h-[43px] shrink-0 items-center gap-[7px] bg-linear-to-b from-[#a0a0a0] to-[#989898] text-[22px] leading-7">
            <svg width="27" height="28" viewBox="0 0 27 28" className="shrink-0" aria-hidden="true">
              <path d="M13 1A12 12 0 1 0 15 24.500L18 27 19 23A12 12 0 0 0 13 1Z" fill="#f0f0f0" stroke="#666" strokeWidth="2" />
              <path d="M11.500 5H15.500V15H11.500ZM11.500 17H15.500V20.500H11.500Z" fill="#777" />
            </svg>
            <Label>Build completed with a result of 'Succeeded'</Label>
          </footer>
        </div>
        <div className="flex w-2.5 shrink-0 flex-col bg-[#805f75]">
          <div className="h-[98px] bg-[#8b857c]" />
          <div className="h-[159px] border-t-2 border-[#b9a3b1] bg-[#7d5a70]" />
          <div className="mb-7 flex-1 border-b-2 border-[#5c4354] bg-[#dcdbdc]" />
        </div>
      </div>
      <div className="h-1 w-[86%] shrink-0 rounded-tr-lg bg-[#e6dee1]" />
    </div>
  );
}
